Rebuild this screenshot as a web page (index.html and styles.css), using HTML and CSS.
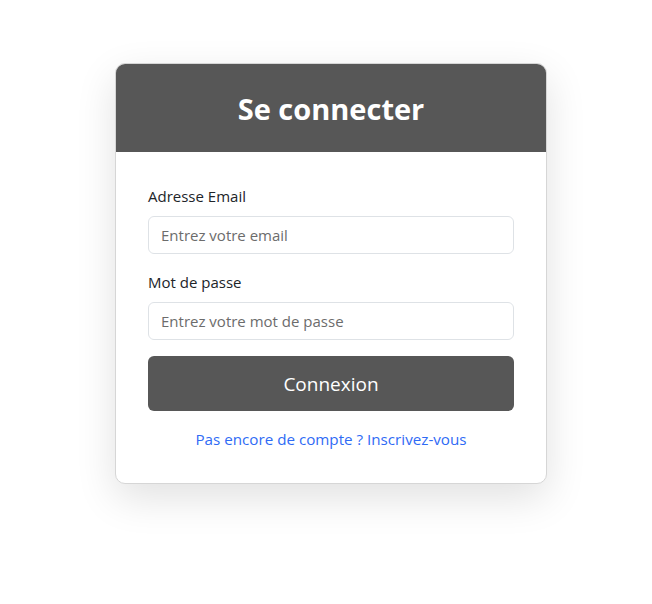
FILE: index.html
```html
<!DOCTYPE html>
<html lang="fr">
<head>
  <meta charset="UTF-8" />
  <meta name="viewport" content="width=device-width, initial-scale=1.0" />
  <title>Se connecter</title>
  <link rel="stylesheet" href="styles.css">
</head>
<body>
  <div class="page">
    <div class="login-card">
      <div class="card-header">
        <h2>Se connecter</h2>
      </div>
      <form class="card-body">
        <div class="field">
          <label for="email">Adresse Email</label>
          <input type="email" id="email" placeholder="Entrez votre email">
        </div>
        <div class="field">
          <label for="password">Mot de passe</label>
          <input type="password" id="password" placeholder="Entrez votre mot de passe">
        </div>
        <button type="submit" class="btn-login">Connexion</button>
        <p class="signup"><a href="#">Pas encore de compte ? Inscrivez-vous</a></p>
      </form>
    </div>
  </div>
</body>
</html>
```

FILE: styles.css
```css
* {
  box-sizing: border-box;
}
body {
  margin: 0;
  font-family: 'Open Sans', 'Noto Sans', sans-serif;
  background: #fff;
  color: #212529;
}
.page {
  min-height: 100vh;
  padding: 63px 0 0 115px;
}
.login-card {
  width: 432px;
  background: #fff;
  border: 1px solid #d6d6d6;
  border-radius: 10px;
  overflow: hidden;
  box-shadow: 0 14px 40px rgba(0,0,0,0.12);
}
.card-header {
  background: #575757;
  height: 88px;
  display: flex;
  align-items: center;
  justify-content: center;
}
.card-header h2 {
  margin: 0;
  color: #fff;
  font-size: 29px;
  font-weight: 700;
}
.card-body {
  padding: 32px 32px 32px;
}
.field {
  margin-bottom: 16px;
}
.field label {
  display: block;
  font-size: 15px;
  line-height: 24px;
  margin-bottom: 8px;
}
.field input {
  display: block;
  width: 100%;
  height: 38px;
  padding: 6px 12px;
  font-family: inherit;
  font-size: 15px;
  color: #212529;
  border: 1px solid #dee2e6;
  border-radius: 6px;
  outline: none;
}
.field input::placeholder {
  color: #6c6c6c;
}
.btn-login {
  display: block;
  width: 100%;
  height: 55px;
  background: #575757;
  color: #fff;
  border: none;
  border-radius: 6px;
  font-family: inherit;
  font-size: 19px;
  margin-bottom: 16px;
}
.signup {
  margin: 0;
  text-align: center;
  font-size: 15.2px;
  line-height: 24px;
}
.signup a {
  color: #2f6bf5;
  text-decoration: none;
}
```
